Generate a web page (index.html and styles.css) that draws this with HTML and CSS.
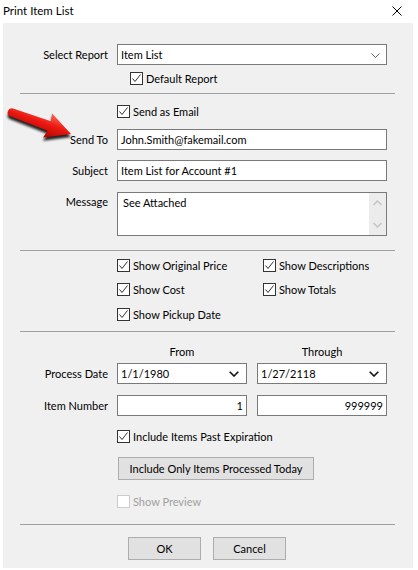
FILE: index.html
```html
<!DOCTYPE html>
<html>
<head>
<meta charset="utf-8">
<link rel="stylesheet" href="styles.css">
</head>
<body>
<div class="window">
  <div class="titlebar">
    <span class="title">Print Item List</span>
    <svg class="close" width="10" height="10" viewBox="0 0 10 10"><path d="M0.5 0.5 L9.5 9.5 M9.5 0.5 L0.5 9.5" stroke="#000" stroke-width="1" fill="none"/></svg>
  </div>
  <div class="content">
    <div class="frow first">
      <span class="lbl">Select Report</span>
      <div class="box combo"><span class="val">Item List</span>
        <svg class="chev" width="9" height="5" viewBox="0 0 9 5"><path d="M0.5 0.5 L4.5 4.5 L8.5 0.5" stroke="#606060" fill="none"/></svg>
      </div>
    </div>
    <div class="crow indent2"><span class="chk"><svg width="11" height="11" viewBox="0 0 11 11"><path d="M1.5 5.5 L4 8.5 L9.5 1.5" stroke="#333" stroke-width="1" fill="none"/></svg></span>Default Report</div>
    <div class="sep s1"></div>

    <div class="crow indent"><span class="chk"><svg width="11" height="11" viewBox="0 0 11 11"><path d="M1.5 5.5 L4 8.5 L9.5 1.5" stroke="#333" stroke-width="1" fill="none"/></svg></span>Send as Email</div>
    <div class="frow r-sendto">
      <span class="lbl">Send To</span>
      <div class="box"><span class="val">John.Smith@fakemail.com</span></div>
    </div>
    <div class="frow r-subject">
      <span class="lbl">Subject</span>
      <div class="box"><span class="val">Item List for Account #1</span></div>
    </div>
    <div class="frow r-message">
      <span class="lbl top">Message</span>
      <div class="box memo"><span class="val memo-val">See Attached</span>
        <div class="vscroll">
          <svg width="9" height="6" viewBox="0 0 9 6"><path d="M0.5 5 L4.5 1 L8.5 5" stroke="#c2c2c2" stroke-width="1.3" fill="none"/></svg>
          <svg width="9" height="6" viewBox="0 0 9 6"><path d="M0.5 1 L4.5 5 L8.5 1" stroke="#c2c2c2" stroke-width="1.3" fill="none"/></svg>
        </div>
      </div>
    </div>
    <div class="sep s2"></div>

    <div class="cgrid">
      <div class="crow"><span class="chk"><svg width="11" height="11" viewBox="0 0 11 11"><path d="M1.5 5.5 L4 8.5 L9.5 1.5" stroke="#333" stroke-width="1" fill="none"/></svg></span>Show Original Price</div>
      <div class="crow"><span class="chk"><svg width="11" height="11" viewBox="0 0 11 11"><path d="M1.5 5.5 L4 8.5 L9.5 1.5" stroke="#333" stroke-width="1" fill="none"/></svg></span>Show Descriptions</div>
      <div class="crow"><span class="chk"><svg width="11" height="11" viewBox="0 0 11 11"><path d="M1.5 5.5 L4 8.5 L9.5 1.5" stroke="#333" stroke-width="1" fill="none"/></svg></span>Show Cost</div>
      <div class="crow"><span class="chk"><svg width="11" height="11" viewBox="0 0 11 11"><path d="M1.5 5.5 L4 8.5 L9.5 1.5" stroke="#333" stroke-width="1" fill="none"/></svg></span>Show Totals</div>
      <div class="crow"><span class="chk"><svg width="11" height="11" viewBox="0 0 11 11"><path d="M1.5 5.5 L4 8.5 L9.5 1.5" stroke="#333" stroke-width="1" fill="none"/></svg></span>Show Pickup Date</div>
    </div>
    <div class="sep s3"></div>

    <div class="frow heads">
      <span></span>
      <div class="pair"><span class="head">From</span><span class="head">Through</span></div>
    </div>
    <div class="frow r-date">
      <span class="lbl">Process Date</span>
      <div class="pair">
        <div class="box combo"><span class="val">1/1/1980</span>
          <svg class="chev2" width="10" height="6" viewBox="0 0 10 6"><path d="M0.7 0.7 L5 5 L9.3 0.7" stroke="#111" stroke-width="1.6" fill="none"/></svg>
        </div>
        <div class="box combo"><span class="val">1/27/2118</span>
          <svg class="chev2" width="10" height="6" viewBox="0 0 10 6"><path d="M0.7 0.7 L5 5 L9.3 0.7" stroke="#111" stroke-width="1.6" fill="none"/></svg>
        </div>
      </div>
    </div>
    <div class="frow r-item">
      <span class="lbl">Item Number</span>
      <div class="pair">
        <div class="box num"><span class="val">1</span></div>
        <div class="box num"><span class="val">999999</span></div>
      </div>
    </div>
    <div class="crow indent r-exp"><span class="chk"><svg width="11" height="11" viewBox="0 0 11 11"><path d="M1.5 5.5 L4 8.5 L9.5 1.5" stroke="#333" stroke-width="1" fill="none"/></svg></span>Include Items Past Expiration</div>
    <div class="btnrow today"><button class="btn wide">Include Only Items Processed Today</button></div>
    <div class="crow indent disabled r-prev"><span class="chk"></span>Show Preview</div>
    <div class="sep s4"></div>
    <div class="btnrow final">
      <button class="btn small">OK</button>
      <button class="btn small">Cancel</button>
    </div>

    <svg class="arrow" width="80" height="50" viewBox="0 0 80 50">
      <defs>
        <linearGradient id="rg" x1="0" y1="0" x2="0" y2="1">
          <stop offset="0" stop-color="#ff6a5a"/>
          <stop offset="0.45" stop-color="#ec1a12"/>
          <stop offset="1" stop-color="#b00000"/>
        </linearGradient>
        <filter id="sh" x="-20%" y="-20%" width="140%" height="160%">
          <feGaussianBlur stdDeviation="1.3"/>
        </filter>
      </defs>
      <g transform="translate(5,8) rotate(20)">
        <g transform="translate(1,3)" filter="url(#sh)" opacity="0.85">
          <path d="M4 -4 L44 -5 L42 -13 L67 0 L42 13 L44 5 L4 4 A4 4 0 0 1 4 -4 Z" fill="#000"/>
        </g>
        <path d="M4 -4 L44 -5 L42 -13 L67 0 L42 13 L44 5 L4 4 A4 4 0 0 1 4 -4 Z" fill="url(#rg)"/>
      </g>
    </svg>
  </div>
</div>
</body>
</html>
```

FILE: styles.css
```css
* { box-sizing: border-box; }
html, body { margin: 0; padding: 0; background: #fff; }
body {
  font-family: "Lato", "Noto Sans", sans-serif;
  font-size: 11px;
  color: #000;
}
.window { width: 418px; height: 570px; background: #fff; display: flex; flex-direction: column; }
.titlebar {
  height: 23px;
  display: flex;
  align-items: center;
  justify-content: space-between;
  padding: 0 16px 0 3px;
}
.title { font-size: 11.5px; line-height: 16px; margin-top: -1px; }
.close { display: block; margin-top: -1px; }
.content {
  position: relative;
  background: #f0f0f0;
  margin: 0 5px 2px 3px;
  flex: 1;
  padding: 21px 0 0 17px;
}
.frow {
  display: grid;
  grid-template-columns: 88px 270px;
  column-gap: 9px;
  align-items: center;
}
.lbl { text-align: right; line-height: 16px; white-space: nowrap; }
.lbl.top { align-self: start; padding-top: 2px; }
.box {
  height: 21px;
  background: #fff;
  border: 1px solid #7a7a7a;
  display: flex;
  align-items: center;
  padding: 0 3px;
  line-height: 16px;
  white-space: nowrap;
  position: relative;
}
.combo { justify-content: space-between; padding-right: 6px; }
.chev { margin-top: 1px; }
.chev2 { margin-right: 1px; }
.num { justify-content: flex-end; padding-right: 3px; }
.memo { height: 44px; align-items: flex-start; padding: 2px 0 0 5px; }
.vscroll {
  position: absolute;
  right: 0; top: 0; bottom: 0;
  width: 17px;
  background: #ececec;
  display: flex;
  flex-direction: column;
  justify-content: space-between;
  align-items: center;
  padding: 7px 0 7px;
}
.vscroll svg { display: block; }
.crow {
  display: flex;
  align-items: center;
  height: 13px;
  line-height: 16px;
  white-space: nowrap;
}
.indent { margin-left: 97px; }
.indent2 { margin-left: 110px; margin-top: 7px; }
.chk {
  width: 13px; height: 13px;
  border: 1px solid #333;
  background: #fff;
  margin-right: 3px;
  display: flex;
  align-items: center;
  justify-content: center;
  flex: none;
}
.chk svg { display: block; }
.disabled { color: #a0a0a0; }
.disabled .chk { border-color: #cccccc; }
.sep { height: 1px; background: #a0a0a0; width: 375px; }
.s1 { margin: 8px 0 11px; }
.r-sendto { margin-top: 11px; }
.r-subject { margin-top: 10px; }
.r-message { margin-top: 11px; }
.s2 { margin: 14px 0 8px; }
.cgrid {
  margin-left: 97px;
  display: grid;
  grid-template-columns: 146px auto;
  row-gap: 11px;
}
.cgrid .crow:nth-child(5) { margin-top: 1px; }
.s3 { margin: 10px 0 0; }
.heads { margin-top: 12px; }
.pair { display: grid; grid-template-columns: 130px 130px; column-gap: 10px; }
.head { text-align: center; line-height: 16px; }
.r-date { margin-top: 3px; }
.r-item { margin-top: 11px; }
.r-exp { margin-top: 14px; }
.btnrow { display: flex; }
.today { margin-top: 14px; padding-left: 98px; }
.btn {
  font-family: inherit;
  font-size: 11px;
  color: #000;
  background: #e1e1e1;
  border: 1px solid #adadad;
  height: 23px;
  padding: 0;
  border-radius: 0;
}
.wide { width: 196px; }
.r-prev { margin-top: 15px; }
.s4 { margin: 16px 0 12px; }
.final { padding-left: 108px; gap: 12px; }
.small { width: 73px; }
.arrow { position: absolute; left: 0; top: 80px; }
```
